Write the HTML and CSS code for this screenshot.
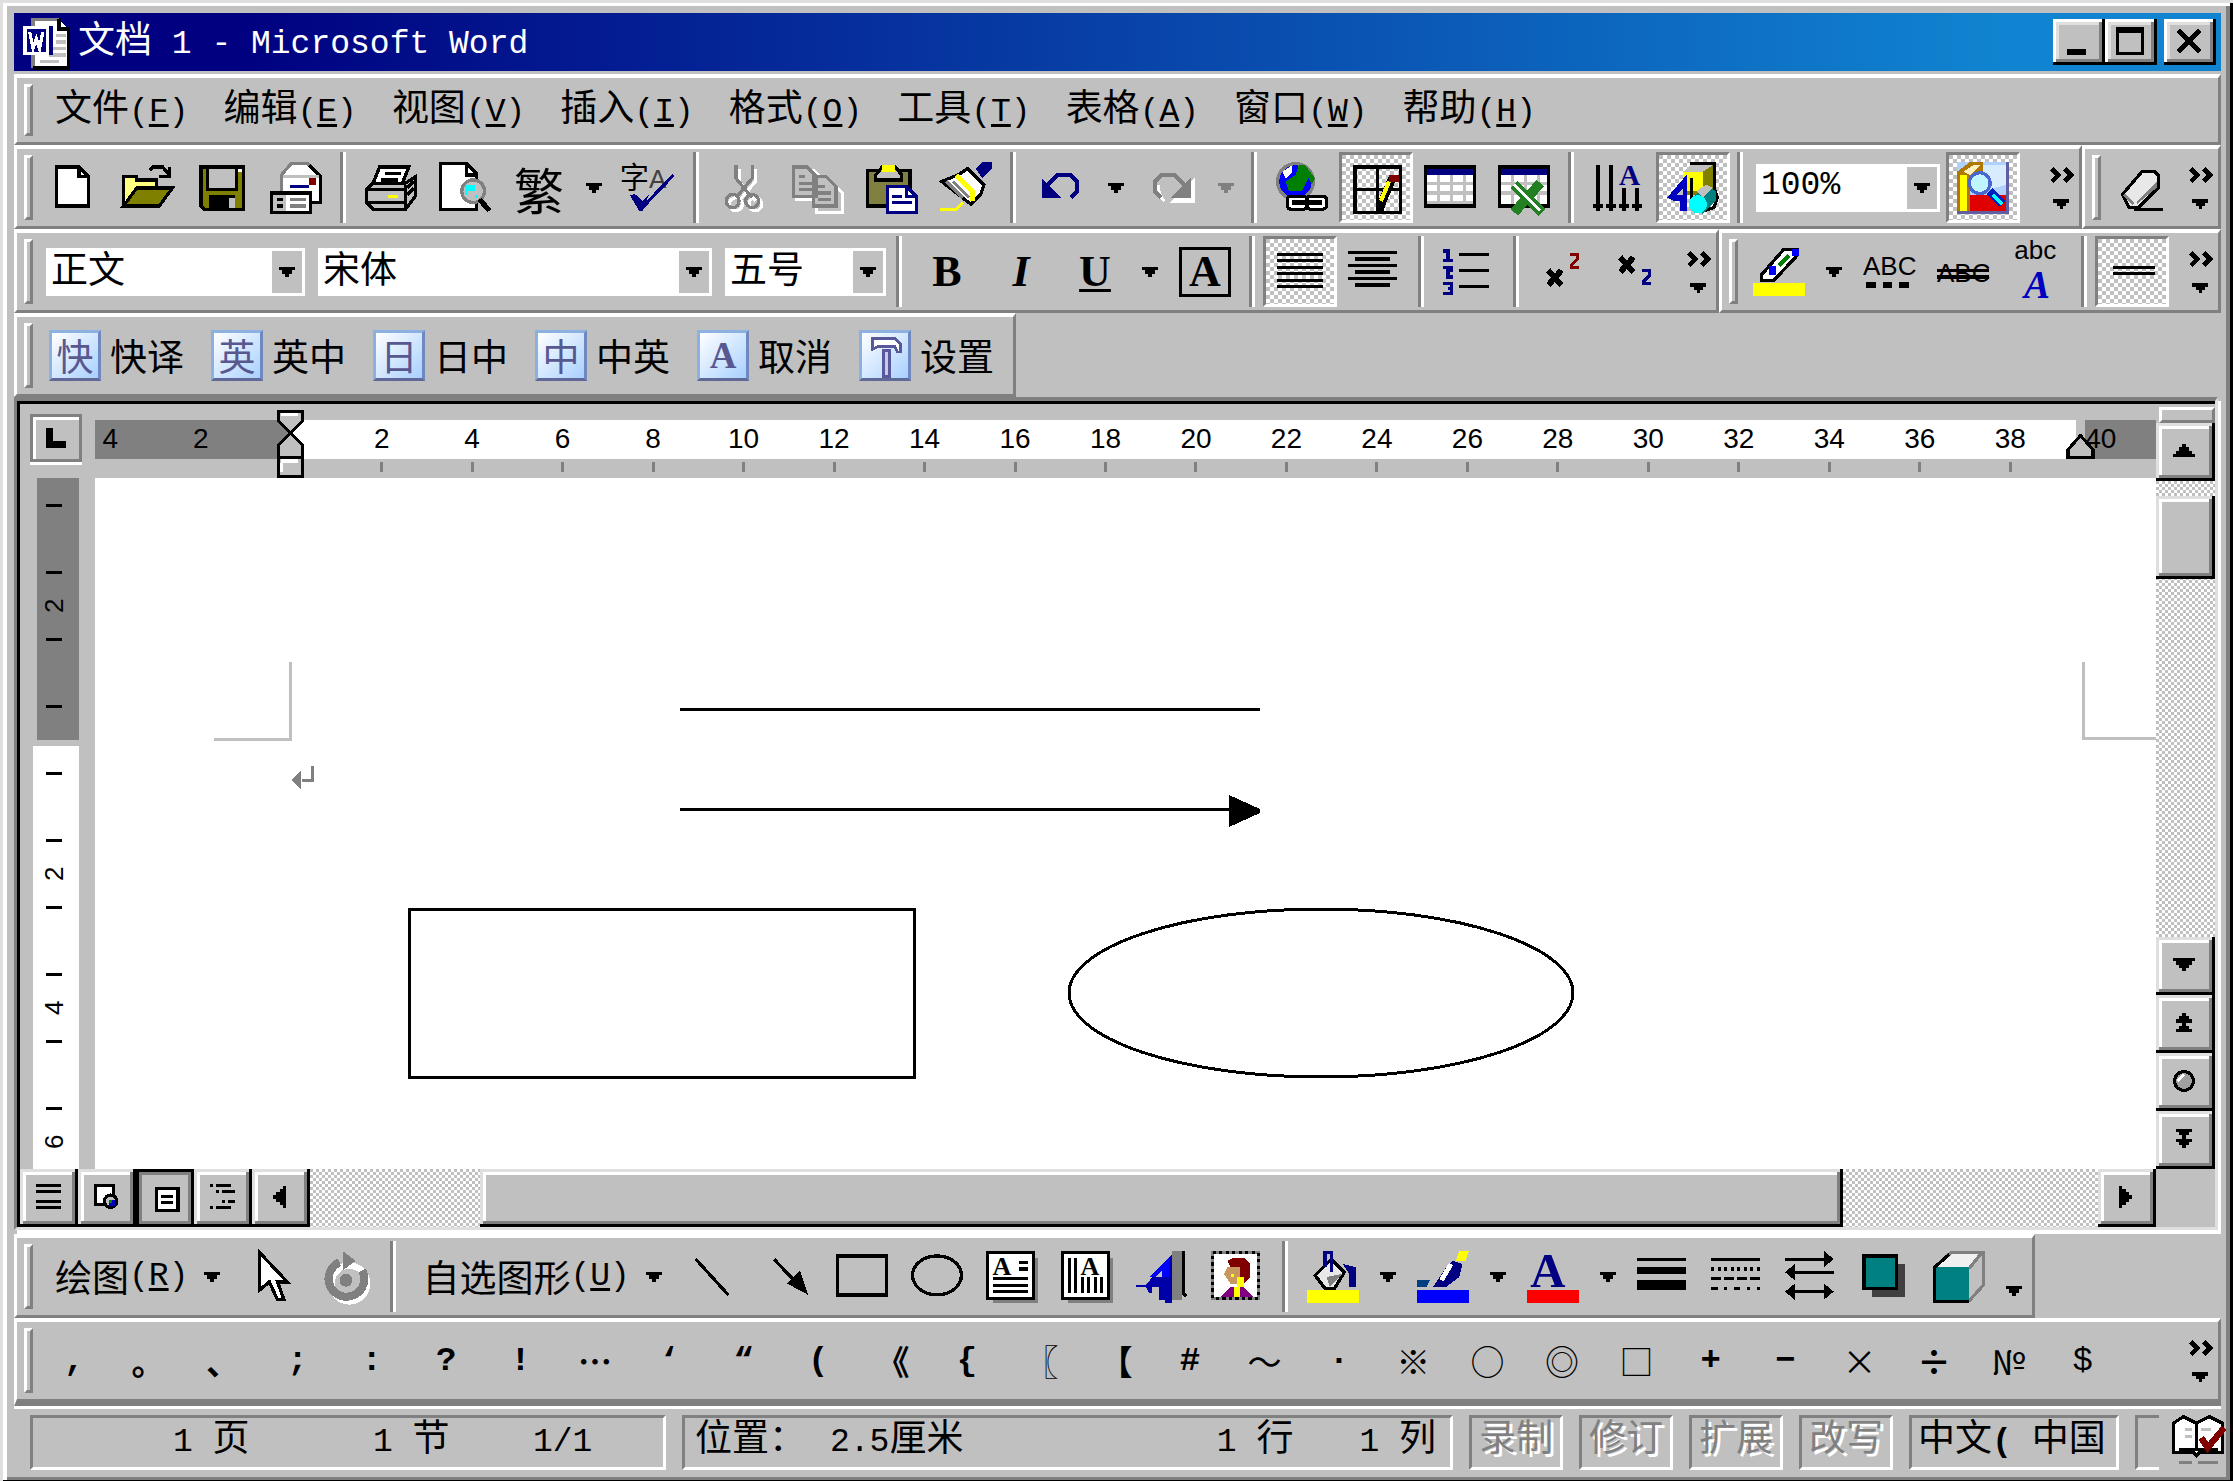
FILE: index.html
```html
<!DOCTYPE html>
<html lang="zh-CN">
<head>
  <meta charset="UTF-8">
  <title>文档 1 - Microsoft Word</title>
  <link rel="stylesheet" href="styles.css">
</head>
<body>

<svg class="defs" aria-hidden="true">
  <symbol id="caret" viewBox="0 0 5 3"><path d="M0 0h5v1H4v1H3v1H2V2H1V1H0z" fill="currentColor"/></symbol>
  <symbol id="more" viewBox="0 0 8 13">
    <path d="M.5 .5l2 2-2 2M4.5 .5l2 2-2 2" fill="none" stroke="#000" stroke-width="1.4"/>
    <path d="M1 10h5v1H5v1H4v1H3v-1H2v-1H1z"/>
  </symbol>
</svg>

<!-- Title bar -->
<header class="title-bar">
  <svg class="icon" viewBox="0 0 16 16">
    <path d="M4 1h8l3 3v12H4z" fill="#fff"/><path d="M4 16V1h8" fill="none" stroke="#808080"/>
    <path d="M12 1v3h3v12H4" fill="none" stroke="#000"/><path d="M11 6h3M11 8h3M10 10h4M9 12h5M6 14h6" stroke="#c0c0c0"/>
    <path d="M0 3h10v9H0z" fill="#000080"/><path d="M1 3.5h8M1 11.5h8M1.5 4v7M8.5 4v7" stroke="#fff"/>
    <path d="M3 5l1 5 1-3 1 3 1-5" fill="none" stroke="#fff"/>
  </svg>
  <h1>文档<span class="en"> 1 - Microsoft Word</span></h1>
  <div class="window-buttons">
    <button class="win-btn" aria-label="最小化"><svg viewBox="0 0 9 9"><path d="M1 7h6v2H1z"/></svg></button>
    <button class="win-btn" aria-label="最大化"><svg viewBox="0 0 9 9"><path d="M0 0h9v9H0zM1 2v6h7V2z" fill-rule="evenodd"/></svg></button>
    <button class="win-btn close" aria-label="关闭"><svg viewBox="0 0 9 9"><path d="M1 1l7 7M8 1L1 8" stroke="#000" stroke-width="1.8"/></svg></button>
  </div>
</header>

<!-- Menu -->
<nav class="bar menu-bar">
  <span class="grip"></span>
  <button>文件<span class="en">(<u>F</u>)</span></button>
  <button>编辑<span class="en">(<u>E</u>)</span></button>
  <button>视图<span class="en">(<u>V</u>)</span></button>
  <button>插入<span class="en">(<u>I</u>)</span></button>
  <button>格式<span class="en">(<u>O</u>)</span></button>
  <button>工具<span class="en">(<u>T</u>)</span></button>
  <button>表格<span class="en">(<u>A</u>)</span></button>
  <button>窗口<span class="en">(<u>W</u>)</span></button>
  <button>帮助<span class="en">(<u>H</u>)</span></button>
</nav>

<!-- Standard toolbar -->
<div class="bar-row">
  <div class="bar grow">
    <span class="grip"></span>
    <button class="tool" aria-label="新建"><svg class="icon" viewBox="0 0 16 16"><path d="M2.5 1.5h7l3 3v9h-10z" fill="#fff" stroke="#000"/><path d="M9.5 2v2.5H12" fill="none" stroke="#000"/></svg></button>
    <button class="tool" aria-label="打开"><svg class="icon" viewBox="0 0 16 16"><path d="M.5 13.5v-9h4v1h6v2.5" fill="#ffff80" stroke="#000"/><path d="M.5 13.5l4-5.5h11l-4 5.5z" fill="#808000" stroke="#000"/><path d="M8.5 2.5l1-1h3l2 2.5M11.5 4.5h3v-3" fill="none" stroke="#000"/></svg></button>
    <button class="tool" aria-label="保存"><svg class="icon" viewBox="0 0 16 16"><path d="M1.5 1.5h13v13h-12l-1-1z" fill="#808000" stroke="#000"/><path d="M4 2h8v6H4z" fill="#c0c0c0"/><path d="M3.5 2v6.5h9V2" fill="none" stroke="#000"/><path d="M4 10h8v5H4z"/><path d="M10 11h2v3h-2z" fill="#c0c0c0"/><path d="M13 2h1v1h-1z" fill="#fff"/></svg></button>
    <button class="tool" aria-label="电子邮件"><svg class="icon" viewBox="0 0 16 16"><path d="M3.5 10V4l3-3.5h5l4 4v8H12" fill="#fff" stroke="#808080"/><path d="M12 1l3.5 3.5v8H13" fill="none" stroke="#000"/><path d="M4 4.5h11" stroke="#c0c0c0"/><path d="M12 5h2v2h-2z" fill="#800000"/><path d="M6 7.5h6" stroke="#000080"/><path d="M.5 9.5h12v6H.5z" fill="#fff" stroke="#000"/><path d="M1 10h4v5H1z" fill="#c0c0c0"/><path d="M2 11.5h2M2 13.5h2" stroke="#000"/><path d="M6 11.5h5M6 13.5h5" stroke="#808080"/></svg></button>
    <span class="sep"></span>
    <button class="tool" aria-label="打印"><svg class="icon" viewBox="0 0 16 16"><path d="M2.5 6.5l2-5h9l-2 5" fill="#fff" stroke="#000"/><path d="M6 3.5h5M5 5.5h5" stroke="#000"/><path d="M.5 8.5l2-2h10l3-2v6l-3 4h-10l-2-2z" fill="#c0c0c0" stroke="#000"/><path d="M1 8.5h11M1 12.5h12M12.5 7v7M13 8l2-2M13 10l2-2" stroke="#000"/><path d="M7 10h3v1H7z" fill="#ff0"/></svg></button>
    <button class="tool" aria-label="打印预览"><svg class="icon" viewBox="0 0 16 16"><path d="M.5 .5h8l3 3v11H.5z" fill="#fff" stroke="#000"/><path d="M8.5 1v3H11" fill="none" stroke="#000"/><circle cx="10.5" cy="9" r="3.5" fill="#c0c0c0" stroke="#808080"/><path d="M8 7h3v2H9v1H8zM11 10h1v1h-1z" fill="#0ff"/><path d="M12.5 11.5l3 3.5" stroke="#000" stroke-width="1.6"/></svg></button>
    <button class="tool big-glyph" aria-label="简繁转换">繁</button>
    <button class="arrow" aria-label="更多转换"><svg class="caret"><use href="#caret"/></svg></button>
    <button class="tool" aria-label="拼写"><svg class="icon" viewBox="0 0 16 16"><text x="-1" y="8" font-size="9" class="cjk">字</text><text x="8" y="8" font-size="8" class="lat" fill="#404040">A</text><path d="M3 10l3 4L15.5 4" fill="none" stroke="#000080"/><path d="M2 10h2l2 2 2-2-2 5H5z" fill="#000080"/></svg></button>
    <span class="sep"></span>
    <button class="tool" aria-label="剪切" disabled><svg class="icon" viewBox="0 0 16 16"><g fill="none" stroke="#fff"><path d="M6.5 2v4l5 6M11.5 2v4l-5 6"/><circle cx="5.5" cy="13" r="2"/><circle cx="11.5" cy="13" r="2"/></g><g fill="none" stroke="#808080"><path d="M5.5 1v4l5 6M10.5 1v4l-5 6"/><circle cx="4.5" cy="12" r="2"/><circle cx="10.5" cy="12" r="2"/></g></svg></button>
    <button class="tool" aria-label="复制" disabled><svg class="icon" viewBox="0 0 16 16"><g fill="#c0c0c0" stroke="#fff"><path d="M1.5 2.5h5l3 3v6h-8zM7.5 5.5h4l4 4v6h-8z"/></g><g fill="#c0c0c0" stroke="#808080"><path d="M.5 1.5h4l3 3v6h-7zM6.5 4.5h4l3 3v6h-7z"/><path d="M2 4.5h2M2 6.5h4M2 8.5h4M8 7.5h2M8 9.5h4M8 11.5h4"/></g></svg></button>
    <button class="tool" aria-label="粘贴"><svg class="icon" viewBox="0 0 16 16"><path d="M.5 2.5h13v11H.5z" fill="#808040" stroke="#000"/><path d="M3 5.5V4l2-2.5h4L11 4v1.5z" fill="#c0c0c0" stroke="#000"/><path d="M5 1h4v2H5z" fill="#ff0"/><path d="M6.5 7.5h6l3 3v5h-9z" fill="#fff" stroke="#000080"/><path d="M8 10.5h3M8 12.5h6M12.5 8v2.5H15" fill="none" stroke="#000080"/></svg></button>
    <button class="tool" aria-label="格式刷"><svg class="icon" viewBox="0 0 16 16"><path d="M.5 6l5-2 3-2 5 5-1 3-3 3z" fill="#fff" stroke="#000"/><path d="M5 4l5 5v3" fill="none" stroke="#ff0" stroke-width="1.6"/><path d="M2 6l5 5M4 6l5 5" stroke="#808080"/><path d="M11 2l2 3 3-3V0h-3z" fill="#000080"/><path d="M0 14.5h5l2-2" fill="none" stroke="#ff0"/></svg></button>
    <span class="sep"></span>
    <button class="tool" aria-label="撤消"><svg class="icon" viewBox="0 0 16 16"><path d="M3 8l4-4h4l2 2v3l-2 2" fill="none" stroke="#000080" stroke-width="1.2"/><path d="M2 5v6h6z" fill="#000080"/></svg></button>
    <button class="arrow" aria-label="撤消列表"><svg class="caret"><use href="#caret"/></svg></button>
    <button class="tool" aria-label="恢复" disabled><svg class="icon" viewBox="0 0 16 16"><path d="M15 6v6H9zM4 7v3l2 2" fill="#fff" stroke="#fff"/><path d="M13 8L9 4H5L3 6v3l2 2" fill="none" stroke="#808080" stroke-width="1.2"/><path d="M14 5v6H8z" fill="#808080"/></svg></button>
    <button class="arrow" aria-label="恢复列表" disabled><svg class="caret"><use href="#caret"/></svg></button>
    <span class="sep"></span>
    <button class="tool" aria-label="超级链接"><svg class="icon" viewBox="0 0 16 16"><circle cx="6" cy="6" r="5.5" fill="#00f" stroke="#808080"/><path d="M7 1h2l3 4-1 2-1-2-2 4H4L3 6l3-2z" fill="#008000"/><path d="M2 3l3-2v2L3 5z" fill="#fff"/><rect x="3.5" y="10.5" width="6" height="4" rx="1" fill="#fff" stroke="#000"/><rect x="9.5" y="10.5" width="6" height="4" rx="1" fill="#fff" stroke="#000"/><path d="M5 12.5h9" stroke="#000" stroke-width="1.6"/></svg></button>
    <button class="tool pressed" aria-label="表格和边框"><svg class="icon" viewBox="0 0 16 16"><path d="M1.5 1.5h14v14h-14zM8.5 2v13M2 8.5h13" fill="none" stroke="#000"/><path d="M13 5l-3 7-1 3" fill="none" stroke="#000" stroke-width="2.5"/><path d="M12 6l-2.5 6" stroke="#ff0" stroke-width="1.3"/><path d="M12 4h3v2h-3z" fill="#800000"/></svg></button>
    <button class="tool" aria-label="插入表格"><svg class="icon" viewBox="0 0 16 16"><path d="M.5 1.5h15v12H.5z" fill="#fff" stroke="#000"/><path d="M1 2h14v2H1z" fill="#000080"/><path d="M4.5 4v9M8.5 4v9M12.5 4v9M1 6.5h14M1 9.5h14M1 12.5h14" stroke="#c0c0c0"/></svg></button>
    <button class="tool" aria-label="插入 Excel 工作表"><svg class="icon" viewBox="0 0 16 16"><path d="M.5 1.5h15v12H.5z" fill="#fff" stroke="#000"/><path d="M1 2h14v2H1z" fill="#000080"/><path d="M4.5 4v9M8.5 4v9M12.5 4v9M1 6.5h14M1 9.5h14" stroke="#c0c0c0"/><path d="M5 7l8.5 8.5M13 6.5L5 15.5" stroke="#228022" stroke-width="3"/><path d="M5 7l8 8" stroke="#fff"/></svg></button>
    <span class="sep"></span>
    <button class="tool" aria-label="更改文字方向"><svg class="icon" viewBox="0 0 16 16"><path d="M1.5 1v14M5.5 1v14M9.5 8v7M13.5 8v7M0 13.5h3M4 13.5h3M8 13.5h3M12 13.5h3" stroke="#000"/><text x="8" y="7" font-size="9" class="serif" fill="#000080">A</text></svg></button>
    <button class="tool pressed" aria-label="绘图"><svg class="icon" viewBox="0 0 16 16"><path d="M5 3l2-2h8v6l-2 3H5z" fill="#808000"/><path d="M5 3h6v6H5z" fill="#ff0"/><path d="M5 3l2-2h7l-3 2z" fill="#c0c0c0"/><path d="M14.5 1v7l1 3-1 3-3 1M7 .5h8" fill="none" stroke="#000"/><path d="M0 11l6-7v11H4v-3H2z" fill="#0000c0"/><path d="M3 10l2-2v2z" fill="#c0c0c0"/><path d="M7.5 5v9" stroke="#000"/><path d="M8 11l4-4 3 2v3l-4 4z" fill="#008080"/><path d="M9 9l3-2 2 1-3 3z" fill="#c0c0c0"/><circle cx="9.5" cy="13" r="2.8" fill="#0ff"/></svg></button>
    <span class="sep"></span>
    <div class="combo zoom"><select class="en" aria-label="显示比例"><option>100%</option></select><span class="drop"><svg class="caret"><use href="#caret"/></svg></span></div>
    <button class="tool pressed" aria-label="查词"><svg class="icon" viewBox="0 0 16 16"><path d="M0 0h16v16H0z" fill="#b0d0ff"/><path d="M15.5 0v15.5H0" fill="none" stroke="#6060a0"/><path d="M8 1h7v6l-7 2z" fill="#d8ecff"/><path d="M0 3l4-3h4v3L4 5v10H0z" fill="#b07800"/><path d="M1 4h2v11H1z" fill="#ff0"/><path d="M2 3l3-2h2L4 4z" fill="#fff0c0"/><path d="M4 10h11v5H4z" fill="#e00000"/><path d="M10 9l4 4" stroke="#0020c0" stroke-width="2.6"/><path d="M11 10l3 3" stroke="#0ff"/><circle cx="7" cy="6.5" r="3.2" fill="#c0f4ff" stroke="#4868d0"/></svg></button>
    <button class="more" aria-label="其他按钮"><svg><use href="#more"/></svg></button>
  </div>
  <div class="bar">
    <span class="grip"></span>
    <button class="tool narrow" aria-label="橡皮擦"><svg class="icon" viewBox="0 0 16 16"><path d="M3.5 10l6-7h4l1 1v4l-6 6h-3z" fill="#e8e8e8" stroke="#000"/><path d="M8 13l6-5V6l-6 6z" fill="#808080"/><path d="M4 10l3 3" stroke="#808080"/><path d="M7 14.5h9" stroke="#000"/></svg></button>
    <button class="more" aria-label="其他按钮"><svg><use href="#more"/></svg></button>
  </div>
</div>

<!-- Formatting toolbar -->
<div class="bar-row">
  <div class="bar grow">
    <span class="grip"></span>
    <div class="combo style"><select aria-label="样式"><option>正文</option></select><span class="drop"><svg class="caret"><use href="#caret"/></svg></span></div>
    <div class="combo font"><select aria-label="字体"><option>宋体</option></select><span class="drop"><svg class="caret"><use href="#caret"/></svg></span></div>
    <div class="combo size"><select aria-label="字号"><option>五号</option></select><span class="drop"><svg class="caret"><use href="#caret"/></svg></span></div>
    <span class="sep wide"></span>
    <button class="tool letter"><b>B</b></button>
    <button class="tool letter"><i>I</i></button>
    <button class="tool letter"><u>U</u></button>
    <button class="arrow" aria-label="下划线样式"><svg class="caret"><use href="#caret"/></svg></button>
    <button class="tool letter"><span class="boxed">A</span></button>
    <span class="sep"></span>
    <button class="tool pressed" aria-label="两端对齐"><svg class="icon" viewBox="0 0 16 16"><path d="M1 2.5h14M1 4.5h14M1 6.5h14M1 8.5h14M1 10.5h14M1 12.5h14" stroke="#000"/></svg></button>
    <button class="tool" aria-label="居中"><svg class="icon" viewBox="0 0 16 16"><path d="M0 2h15M2 4h11M0 6h15M2 8h11M0 10h15M2 12h11" stroke="#000"/></svg></button>
    <span class="sep"></span>
    <button class="tool" aria-label="编号"><svg class="icon" viewBox="0 0 16 16"><path d="M5 2.5h9M5 7.5h9M5 12.5h9" stroke="#000"/><path d="M0 1.5h1.5V4M0 4.5h3M0 6.5h2.5v1h-1v2H3M0 11.5h2.5v1.5h-1M2.5 13v1.5H0" fill="none" stroke="#000080"/></svg></button>
    <span class="sep"></span>
    <button class="tool script" aria-label="上标"><svg class="icon" viewBox="0 0 16 16"><path d="M3.5 7.5l4 4.5M7.5 7.5l-4 4.5" stroke="#000" stroke-width="1.8"/><path d="M10 2.5h2.5v1.5l-2 2v.5H13" fill="none" stroke="#800000"/></svg></button>
    <button class="tool script" aria-label="下标"><svg class="icon" viewBox="0 0 16 16"><path d="M3.500 3.5l4 4.5M7.5 3.5l-4 4.5" stroke="#000" stroke-width="1.8"/><path d="M10 7.5h2.5v1.5l-2 2v.5H13" fill="none" stroke="#000080"/></svg></button>
    <button class="more tight" aria-label="其他按钮"><svg><use href="#more"/></svg></button>
  </div>
  <div class="bar">
    <span class="grip"></span>
    <button class="tool" aria-label="突出显示"><svg class="icon" viewBox="0 0 16 16"><path d="M0 11.5h16v4H0z" fill="#ff0"/><path d="M2.5 10.5V9l7-8h4v2l-7 7.5z" fill="#fff" stroke="#000"/><path d="M12 1h2v2h-2zM5 6h2v3H5z" fill="#00f"/><path d="M8 6l3-3" stroke="#008000" stroke-width="1.5"/></svg></button>
    <button class="arrow" aria-label="突出显示颜色"><svg class="caret"><use href="#caret"/></svg></button>
    <button class="tool" aria-label="着重号"><svg class="icon" viewBox="0 0 16 16"><text x="0" y="9" font-size="8" class="lat">ABC</text><path d="M1 11h3v2H1zM6 11h3v2H6zM11 11h3v2h-3z"/></svg></button>
    <button class="tool" aria-label="双删除线"><svg class="icon" viewBox="0 0 16 16"><text x="0" y="11" font-size="8" class="lat">ABC</text><path d="M0 7.5h16M0 9.5h16" stroke="#000"/></svg></button>
    <button class="tool" aria-label="更改大小写"><svg class="icon" viewBox="0 0 16 16"><text x="1" y="4" font-size="8" class="lat">abc</text><text x="4" y="16" font-size="12" class="serif-i" fill="#0000c0">A</text></svg></button>
    <span class="sep"></span>
    <button class="tool pressed" aria-label="线型"><svg class="icon" viewBox="0 0 16 16"><path d="M2 6.5h13M2 8.5h13" stroke="#000"/></svg></button>
    <button class="more" aria-label="其他按钮"><svg><use href="#more"/></svg></button>
  </div>
</div>

<!-- Translation toolbar -->
<div class="bar-row">
  <div class="bar translate">
    <span class="grip"></span>
    <button class="trans"><span class="tile">快</span>快译</button>
    <button class="trans"><span class="tile">英</span>英中</button>
    <button class="trans"><span class="tile">日</span>日中</button>
    <button class="trans"><span class="tile">中</span>中英</button>
    <button class="trans"><span class="tile serif">A</span>取消</button>
    <button class="trans"><span class="tile"><svg class="hammer" viewBox="0 0 16 16"><path d="M7.5 6h2v9.5h-2z" fill="#c8c8e8" stroke="#58589a"/><path d="M3.5 1.5v4l2-1h6l1 2h1v-3l-2-2z" fill="#fff" stroke="#58589a"/></svg></span>设置</button>
  </div>
</div>

<!-- Document window -->
<main class="doc-frame">
  <div class="corner"><button class="tab-stop" aria-label="制表符"><svg viewBox="0 0 6 6"><path d="M0 0h2v4h4v2H0z"/></svg></button></div>
  <div class="ruler">
    <div class="ruler-numbers">
      <span>4</span><span>2</span><span></span>
      <span class="t">2</span><span class="t">4</span><span class="t">6</span><span class="t">8</span><span class="t">10</span>
      <span class="t">12</span><span class="t">14</span><span class="t">16</span><span class="t">18</span><span class="t">20</span>
      <span class="t">22</span><span class="t">24</span><span class="t">26</span><span class="t">28</span><span class="t">30</span>
      <span class="t">32</span><span class="t">34</span><span class="t">36</span><span class="t">38</span><span>40</span>
    </div>
    <svg class="indent-left" viewBox="0 0 9 22"><path d="M.5 .5h8v3l-4 4 4 4v10h-8v-10l4-4-4-4z" fill="#c0c0c0" stroke="#000"/><path d="M0 15.5h9" stroke="#000"/><path d="M1.5 17v3M1.5 16.5H7M1.5 1.5H7" stroke="#fff"/></svg>
    <svg class="indent-right" viewBox="0 0 9 8"><path d="M.5 7.5V5l4-4.5 4 4.5v2.5z" fill="#c0c0c0" stroke="#000"/></svg>
  </div>
  <div class="v-ruler">
    <div class="v-margin"><span></span><span>2</span><span></span><span></span></div>
    <div class="v-page"><span></span><span>2</span><span></span><span>4</span><span></span><span>6</span></div>
  </div>
  <div class="page">
    <svg class="canvas">
      <path d="M195 184v77H119" fill="none" stroke="#c0c0c0" stroke-width="3"/>
      <path d="M217 288v14h-10" fill="none" stroke="#808080" stroke-width="3"/><path d="M197 302l9-10v20z" fill="#808080"/>
      <path d="M585 231h580M585 331h550" stroke="#000" stroke-width="3"/>
      <path d="M1134 317v32l31-14v-4z"/>
      <path d="M314 431h505v168H314z" fill="none" stroke="#000" stroke-width="3"/>
      <ellipse cx="1226" cy="515" rx="252" ry="84" fill="none" stroke="#000" stroke-width="3"/>
    </svg>
    <div class="crop-mark"></div>
  </div>
  <div class="v-scroll">
    <button class="split" aria-label="拆分"></button>
    <button class="raised" aria-label="向上滚动"><svg class="tri" viewBox="0 0 7 4"><path d="M3 0h1v1h1v1h1v1h1v1H0V3h1V2h1V1h1z"/></svg></button>
    <div class="v-track"><div class="raised v-thumb"></div></div>
    <button class="raised" aria-label="向下滚动"><svg class="tri" viewBox="0 0 7 4"><path d="M0 0h7v1H6v1H5v1H4v1H3V3H2V2H1V1H0z"/></svg></button>
    <button class="raised" aria-label="前一页"><svg class="dbl" viewBox="0 0 5 6"><path d="M2 0h1v1h1v1h1v1H3v1h1v1h1v1H0V5h1V4h1V3H0V2h1V1h1z"/></svg></button>
    <button class="raised" aria-label="选择浏览对象"><svg class="ball" viewBox="0 0 7 7"><circle cx="3.5" cy="3.5" r="3" fill="#a0a0a0" stroke="#000"/><path d="M1.5 3.5l2-2" stroke="#fff"/></svg></button>
    <button class="raised" aria-label="下一页"><svg class="dbl" viewBox="0 0 5 6"><path d="M0 0h5v1H4v1H3v1h2v1H4v1H3v1H2V5H1V4H0V3h2V2H1V1H0z"/></svg></button>
  </div>
  <div class="h-scroll">
    <button class="raised" aria-label="普通视图"><svg class="view" viewBox="0 0 8 8"><path d="M0 .5h8M0 2.5h8M0 5.5h8M0 7.5h8" stroke="#000"/></svg></button>
    <button class="raised" aria-label="Web 版式视图"><svg class="view" viewBox="0 0 8 8"><path d="M.5 .5h6v6h-6z" fill="#fff" stroke="#000"/><circle cx="5.5" cy="5.5" r="2" fill="#c0c0c0" stroke="#000"/><path d="M5 5h2v2H5z" fill="#0000c0"/><path d="M5 5h1v1H5z" fill="#008000"/></svg></button>
    <button class="raised down" aria-label="页面视图"><svg class="view" viewBox="0 0 8 8"><path d="M.5 .5h7v7h-7z" fill="#fff" stroke="#000"/><path d="M2 3h4M2 5h4" stroke="#000"/></svg></button>
    <button class="raised" aria-label="大纲视图"><svg class="view" viewBox="0 0 8 8"><path d="M0 .5h1M2 .5h5M2 2.5h1M4 2.5h4M4 5.5h1M6 5.5h2M0 7.5h1M2 7.5h5" stroke="#000"/></svg></button>
    <button class="raised" aria-label="向左滚动"><svg class="side" viewBox="0 0 4 7"><path d="M4 0v7H3V6H2V5H1V4H0V3h1V2h1V1h1V0z"/></svg></button>
    <div class="h-track"><div class="raised h-thumb"></div></div>
    <button class="raised" aria-label="向右滚动"><svg class="side" viewBox="0 0 4 7"><path d="M0 0v7h1V6h1V5h1V4h1V3H3V2H2V1H1V0z"/></svg></button>
    <div class="size-box"></div>
  </div>
</main>

<!-- Drawing toolbar -->
<div class="bar-row">
  <div class="bar drawing">
    <span class="grip"></span>
    <button class="text-tool">绘图<span class="en">(<u>R</u>)</span><svg class="caret"><use href="#caret"/></svg></button>
    <button class="tool" aria-label="选择对象"><svg class="icon" viewBox="0 0 16 16"><path d="M4.5 .5v11.5l3-2.5 2.5 5.5h2l-2-5.5h3z" fill="#fff" stroke="#000"/></svg></button>
    <button class="tool" aria-label="自由旋转" disabled><svg class="icon" viewBox="0 0 16 16"><circle cx="9" cy="10" r="5.5" fill="none" stroke="#fff" stroke-width="2"/><path d="M6 3.5A5.5 5.5 0 1 0 13 6" fill="none" stroke="#808080" stroke-width="2.5"/><path d="M7 0v6l4-3z" fill="#808080"/><circle cx="8" cy="9" r="2" fill="#808080"/></svg></button>
    <span class="sep"></span>
    <button class="text-tool">自选图形<span class="en">(<u>U</u>)</span><svg class="caret"><use href="#caret"/></svg></button>
    <button class="tool" aria-label="直线"><svg class="icon" viewBox="0 0 16 16"><path d="M3 2.5l10 11" stroke="#000"/></svg></button>
    <button class="tool" aria-label="箭头"><svg class="icon" viewBox="0 0 16 16"><path d="M4 2.5l8 8.5" stroke="#000"/><path d="M14.5 13.5L8 10l4-4z"/></svg></button>
    <button class="tool" aria-label="矩形"><svg class="icon" viewBox="0 0 16 16"><path d="M.5 1.5h15v12H.5z" fill="none" stroke="#000"/></svg></button>
    <button class="tool" aria-label="椭圆"><svg class="icon" viewBox="0 0 16 16"><ellipse cx="8" cy="7.5" rx="7.5" ry="6" fill="none" stroke="#000"/></svg></button>
    <button class="tool" aria-label="文本框"><svg class="icon" viewBox="0 0 16 16"><path d="M2 2h14v14H2z" fill="#808080"/><path d="M.5 .5h14v14H.5z" fill="#fff" stroke="#000"/><path d="M10 3.5h3M10 5.5h3M2 8.5h11M2 10.5h11M2 12.5h11" stroke="#000"/><text x="2" y="7.5" font-size="8" class="serif">A</text></svg></button>
    <button class="tool" aria-label="竖排文本框"><svg class="icon" viewBox="0 0 16 16"><path d="M2 2h14v14H2z" fill="#808080"/><path d="M.5 .5h14v14H.5z" fill="#fff" stroke="#000"/><path d="M2.5 2v11M4.5 2v11M6.5 8v5M8.5 8v5M10.5 8v5M12.5 8v5" stroke="#000"/><text x="6" y="7.5" font-size="8" class="serif">A</text></svg></button>
    <button class="tool" aria-label="插入艺术字"><svg class="icon" viewBox="0 0 16 16"><path d="M11 0h3v15h-3z" fill="#808080"/><path d="M14.5 0v13l1 1" fill="none" stroke="#000"/><path d="M0 10.5h3L11 1v15h-2v-1H7v-4H5v2H4l-1-2H0z" fill="#0000a8"/><path d="M4 8l6-6v6z" fill="#00f"/><path d="M6 8l2-2v2z" fill="#c0c0c0"/></svg></button>
    <button class="tool" aria-label="插入剪贴画"><svg class="icon" viewBox="0 0 16 16"><path d="M.5 .5h14v14H.5z" fill="#fff" stroke="#808080"/><path d="M.5 .5h14v14H.5z" fill="none" stroke="#000" stroke-dasharray="1 1"/><path d="M5 3l2-1h3l2 2v4l-2 2-4-5z" fill="#800000"/><path d="M5 5h4v5H6L4 7z" fill="#c89860"/><path d="M6 7h1v1H6zM8 8h2v3H8z" fill="#ff0"/><path d="M3 14l3-3h4l3 3z" fill="#800080"/><path d="M7 11h2v3H7z" fill="#ff0"/></svg></button>
    <span class="sep"></span>
    <button class="tool" aria-label="填充颜色"><svg class="icon" viewBox="0 0 16 16"><path d="M0 12h16v4H0z" fill="#ff0"/><path d="M2.5 7.5l5-5 4 4-3 5h-3z" fill="#e8e8e8" stroke="#000"/><path d="M6 8l5-1-4 4z" fill="#808080"/><path d="M5.5 5V.5h2v6" fill="none" stroke="#000080"/><path d="M11 4l4 1v6h-2V7z" fill="#000080"/></svg></button>
    <button class="arrow" aria-label="填充颜色列表"><svg class="caret"><use href="#caret"/></svg></button>
    <button class="tool" aria-label="线条颜色"><svg class="icon" viewBox="0 0 16 16"><path d="M0 12h16v4H0z" fill="#00f"/><path d="M13 0h3l-1 3h-3z" fill="#ff0"/><path d="M5 11l4-6 2-2 3 1-1 4-4 3z" fill="#000080"/><path d="M7.5 9l3-5" stroke="#fff" stroke-width="1.5"/><path d="M0 9h4l-1 2H0z" fill="#004080"/></svg></button>
    <button class="arrow" aria-label="线条颜色列表"><svg class="caret"><use href="#caret"/></svg></button>
    <button class="tool" aria-label="字体颜色"><svg class="icon" viewBox="0 0 16 16"><path d="M0 12h16v4H0z" fill="red"/><text x="1" y="11" font-size="15" class="serif" fill="#000080">A</text></svg></button>
    <button class="arrow" aria-label="字体颜色列表"><svg class="caret"><use href="#caret"/></svg></button>
    <button class="tool" aria-label="线型"><svg class="icon" viewBox="0 0 16 16"><path d="M0 2h15v1H0zM0 5h15v2H0zM0 9h15v3H0z"/></svg></button>
    <button class="tool" aria-label="虚线线型"><svg class="icon" viewBox="0 0 16 16"><path d="M0 2.5h15" stroke="#000"/><path d="M0 5.5h15" stroke="#000" stroke-dasharray="1 1"/><path d="M0 8.5h15" stroke="#000" stroke-dasharray="3 1"/><path d="M0 11.5h15" stroke="#000" stroke-dasharray="2 2 1 2"/></svg></button>
    <button class="tool" aria-label="箭头样式"><svg class="icon" viewBox="0 0 16 16"><path d="M0 2.5h14M1 6.5h14M1 12.5h13" stroke="#000"/><path d="M12 0l3 2.5L12 5zM3 4L0 6.5 3 9zM3 10l-3 2.5L3 15zM12 10l3 2.5-3 2.5z"/></svg></button>
    <button class="tool" aria-label="阴影"><svg class="icon" viewBox="0 0 16 16"><path d="M4 4h10v10H4z" fill="#404040"/><path d="M1.5 1.5h10v10h-10z" fill="#008080" stroke="#000"/></svg></button>
    <button class="tool" aria-label="三维效果"><svg class="icon" viewBox="0 0 16 16"><path d="M.5 5l5-4.5h10v10l-4.5 5" fill="#c0c0c0" stroke="#808080"/><path d="M1 5l5-4h9l-4 4z" fill="#f0f0f0"/><path d="M11 5.5l4-5" stroke="#808080"/><path d="M.5 5h10.5v10.5H.5z" fill="#008080"/><path d="M5 1L.5 5v10.5H11" fill="none" stroke="#000"/></svg></button>
    <button class="arrow low" aria-label="其他按钮"><svg class="caret"><use href="#caret"/></svg></button>
  </div>
</div>

<!-- Symbol toolbar -->
<div class="bar symbols">
  <span class="grip"></span>
  <button>,</button><button class="cjk">。</button><button class="cjk">、</button><button>;</button><button>:</button><button>?</button><button>!</button>
  <button class="cjk">…</button><button>‘</button><button>“</button><button>(</button><button class="cjk">《</button><button>{</button><button class="cjk">〖</button>
  <button class="cjk">【</button><button>#</button><button class="cjk light">～</button><button>·</button><button class="cjk">※</button><button class="cjk light">○</button><button class="cjk light">◎</button>
  <button class="cjk light">□</button><button>+</button><button>−</button><button class="cjk light">×</button><button class="cjk">÷</button><button class="cjk light">№</button><button class="light">$</button>
  <button class="more" aria-label="其他按钮"><svg><use href="#more"/></svg></button>
</div>

<!-- Status bar -->
<footer class="status">
  <div class="panel page-info"><span><span class="en">1 </span>页</span><span><span class="en">1 </span>节</span><span class="en">1/1</span></div>
  <div class="panel position"><span>位置：</span><span><span class="en">2.5</span>厘米</span><span class="line-no"><span class="en">1 </span>行</span><span><span class="en">1 </span>列</span></div>
  <div class="panel mode">录制</div>
  <div class="panel mode">修订</div>
  <div class="panel mode">扩展</div>
  <div class="panel mode">改写</div>
  <div class="panel language">中文<b class="en">(</b><span>中国</span></div>
  <div class="panel spell"></div>
  <svg class="icon book" viewBox="0 0 16 16"><path d="M.5 2.5l3-2 4 2 4-2 4 2v9h-7l-1 1-1-1h-6z" fill="#fff" stroke="#000"/><path d="M7.5 2v9M2 10.5h12" stroke="#000"/><path d="M4 4.5h2M4 6.5h2M9 4.5h3" stroke="#c0c0c0"/><path d="M9 7l2 3 5-6" fill="none" stroke="#800000" stroke-width="2"/><path d="M2 14.5h4M8 14.5h6" stroke="#808080"/></svg>
</footer>

</body>
</html>
```
FILE: styles.css
```css
* {
  box-sizing: border-box;
}

body {
  margin: 0;
  height: 100vh;
  padding: 13px 12px 11px 14px;
  display: flex;
  flex-direction: column;
  overflow: hidden;
  background: #c0c0c0;
  box-shadow: inset 3px 3px #dfdfdf, inset -3px -1px #000, inset 7px 6px #fff, inset -7px -4px #808080;
  font-family: "Noto Sans CJK SC", sans-serif;
  font-size: 37px;
  line-height: 1;
  color: #000;
}

button {
  margin: 0;
  padding: 0;
  border: none;
  background: none;
  font: inherit;
  color: inherit;
}

svg {
  display: block;
  shape-rendering: crispEdges;
}

.defs {
  position: absolute;
  width: 0;
  height: 0;
}

.icon {
  width: 52px;
  height: 52px;
  overflow: visible;
}

.en {
  font-family: "Liberation Mono", monospace;
  font-size: 33px;
  white-space: pre;
}

.lat {
  font-family: "Liberation Sans", sans-serif;
}

.serif {
  font-family: "Liberation Serif", serif;
  font-weight: bold;
}

.serif-i {
  font-family: "Liberation Serif", serif;
  font-weight: bold;
  font-style: italic;
}

.cjk {
  font-family: "Noto Sans CJK SC", sans-serif;
}

/* title bar */
.title-bar {
  display: flex;
  align-items: center;
  height: 58px;
  margin-bottom: 3px;
  padding: 0 5px 0 6px;
  background: linear-gradient(to right, #000080 10%, #1084d0 90%);
  color: #fff;
}

.title-bar h1 {
  margin: 0 0 0 6px;
  padding-bottom: 4px;
  font-size: 37px;
  font-weight: normal;
}

.window-buttons {
  display: flex;
  margin-left: auto;
}

.win-btn {
  display: flex;
  align-items: center;
  justify-content: center;
  width: 52px;
  height: 46px;
  padding: 0 3px 3px 0;
  background: #c0c0c0;
  box-shadow: inset -3px -3px #000, inset 3px 3px #fff, inset -6px -6px #808080, inset 6px 6px #dfdfdf;
}

.win-btn svg {
  width: 28px;
  height: 28px;
}

.win-btn.close {
  margin-left: 7px;
}

/* toolbars */
.bar-row {
  display: flex;
}

.bar {
  display: flex;
  align-items: center;
  height: 84px;
  border: solid;
  border-width: 4px 3px 3px;
  border-color: #fff #808080 #808080 #fff;
}

.grow {
  flex: 1;
}

.grip {
  align-self: stretch;
  flex: none;
  width: 9px;
  margin: 6px 4px 6px 7px;
  border: 3px solid;
  border-color: #fff #808080 #808080 #fff;
}

.menu-bar {
  height: 71px;
}

.menu-bar button {
  padding: 0 17px 4px 18px;
}

u {
  text-decoration-thickness: 3px;
  text-underline-offset: 3px;
}

.tool {
  display: flex;
  align-items: center;
  justify-content: center;
  width: 74px;
  height: 71px;
  flex: none;
}

.narrow {
  width: 64px;
}

.script {
  width: 72px;
}

.pressed {
  border: 3px solid;
  border-color: #808080 #fff #fff #808080;
  background: repeating-conic-gradient(#fff 0 25%, #c0c0c0 0 50%) 0 0 / 8px 8px;
}

.big-glyph {
  font-size: 50px;
}

.arrow {
  display: flex;
  align-items: center;
  justify-content: center;
  width: 36px;
  height: 71px;
}

.arrow:disabled {
  color: #808080;
}

.arrow.low {
  align-items: flex-end;
  padding-bottom: 16px;
}

.caret {
  width: 16px;
  height: 10px;
}

.sep {
  flex: none;
  width: 6px;
  height: 71px;
  margin: 0 8px 0 7px;
  border-left: 3px solid #808080;
  border-right: 3px solid #fff;
}

.more {
  flex: none;
  width: 49px;
  height: 71px;
  padding-right: 3px;
  margin-left: auto;
}

.more.tight {
  width: 42px;
}

.more svg {
  width: 26px;
  height: 42px;
  margin-left: auto;
}

.combo {
  display: flex;
  flex: none;
  height: 48px;
  padding: 3px;
  background: #fff;
}

/* taller than the box so that the full line of Chinese text fits */
.combo select {
  flex: 1;
  height: 56px;
  margin-top: -12px;
  padding: 0 0 0 2px;
  border: none;
  appearance: none;
  background: none;
  color: #000;
  font-family: "Noto Sans CJK SC", sans-serif;
  font-size: 37px;
}

.combo select.en {
  height: 34px;
  margin-top: 0;
  font-family: "Liberation Mono", monospace;
  font-size: 33px;
}

.drop {
  display: flex;
  align-items: center;
  justify-content: center;
  width: 30px;
  background: #c0c0c0;
}

.zoom {
  width: 184px;
  margin: 0 6px 0 5px;
}

.style {
  width: 259px;
  margin-left: 9px;
}

.font {
  width: 394px;
  margin: 0 13px;
}

.size {
  width: 161px;
}

.sep.wide {
  margin-left: 10px;
}

.letter {
  font-family: "Liberation Serif", serif;
  font-weight: bold;
  font-size: 44px;
}

.boxed {
  width: 52px;
  height: 50px;
  border: 3px solid #000;
  line-height: 44px;
}

.translate {
  padding-right: 4px;
}

.trans {
  display: flex;
  align-items: center;
  gap: 9px;
  padding: 0 15px 0 12px;
}

.tile {
  display: flex;
  align-items: center;
  justify-content: center;
  width: 52px;
  height: 51px;
  border: 3px solid;
  border-color: #8cb0e0 #7088c0 #606898 #8cb0e0;
  background: linear-gradient(135deg, #fff, #a8d0ff);
  color: #585890;
}

.hammer {
  width: 44px;
  height: 44px;
}

/* document window */
.doc-frame {
  flex: 1;
  min-height: 0;
  display: grid;
  grid-template: 74px 1fr 58px / 75px 1fr 59px;
  border: 3px solid;
  border-color: #808080 #dfdfdf #dfdfdf #808080;
  border-top-width: 4px;
  box-shadow: inset 3px 3px #000, 3px 4px #fff;
  padding: 3px 0 0 3px;
  margin: 0 3px 4px 0;
}

.corner {
  padding: 10px 0 0 10px;
}

.tab-stop {
  display: flex;
  align-items: center;
  justify-content: center;
  width: 52px;
  height: 48px;
  border: 3px solid #808080;
  box-shadow: inset 3px 3px #fff, 0 3px #fff;
}

.tab-stop svg {
  width: 20px;
  height: 20px;
}

.ruler {
  position: relative;
  margin: 16px 0 19px;
  background: linear-gradient(to right, #808080 195px, #fff 195px, #fff calc(100% - 80px), #c0c0c0 calc(100% - 80px), #c0c0c0 calc(100% - 71px), #808080 calc(100% - 71px));
}

.ruler-numbers {
  display: grid;
  grid-template-columns: repeat(23, 1fr);
  margin: 0 10px 0 -30px;
  font-family: "Liberation Sans", sans-serif;
  font-size: 28px;
  line-height: 37px;
  text-align: center;
}

.ruler-numbers .t::after {
  content: "";
  display: block;
  width: 3px;
  height: 10px;
  margin: 5px auto 0;
  background: #808080;
}

.indent-left {
  position: absolute;
  left: 181px;
  top: -10px;
  width: 29px;
  height: 68px;
}

.indent-right {
  position: absolute;
  right: 61px;
  bottom: 0;
  width: 29px;
  height: 25px;
}

.v-ruler {
  display: flex;
  flex-direction: column;
  overflow: hidden;
  padding: 0 16px 0 13px;
  font-family: "Liberation Sans", sans-serif;
  font-size: 26px;
}

.v-margin {
  height: 262px;
  margin: 0 0 6px 4px;
  padding: 26px 0 0 9px;
  background: #808080;
}

.v-page {
  flex: 1;
  min-height: 0;
  padding: 26px 0 0 13px;
  background: #fff;
}

/* turned upside down, so the bottom border is the tick above the number */
.v-ruler span {
  display: flex;
  justify-content: center;
  width: 16px;
  height: 67px;
  border-bottom: 3px solid #000;
  writing-mode: vertical-rl;
  transform: rotate(180deg);
  line-height: 16px;
}

.page {
  position: relative;
  overflow: hidden;
  background: #fff;
}

.canvas {
  position: absolute;
  width: 100%;
  height: 100%;
}

.crop-mark {
  position: absolute;
  top: 184px;
  right: 0;
  width: 74px;
  height: 78px;
  border: solid #c0c0c0;
  border-width: 0 0 3px 3px;
}

.raised {
  display: flex;
  align-items: center;
  justify-content: center;
  flex: none;
  width: 59px;
  height: 58px;
  padding: 0 3px 3px 0;
  background: #c0c0c0;
  box-shadow: inset -3px -3px #000, inset 3px 3px #dfdfdf, inset -6px -6px #808080, inset 6px 6px #fff;
}

.v-scroll {
  grid-column: 3;
  grid-row: 1 / 3;
  display: flex;
  flex-direction: column;
}

.split {
  height: 16px;
  margin: 3px 0 0 3px;
  border: 3px solid;
  border-color: #fff #808080 #808080 #fff;
}

.v-track {
  flex: 1;
  padding-top: 15px;
  background: repeating-conic-gradient(#fff 0 25%, #c0c0c0 0 50%) 0 0 / 6px 6px;
}

.v-thumb {
  height: 83px;
}

.tri {
  width: 22px;
  height: 13px;
}

.dbl {
  width: 16px;
  height: 19px;
}

.ball {
  width: 22px;
  height: 22px;
}

.side {
  width: 13px;
  height: 22px;
}

.view {
  width: 26px;
  height: 25px;
}

.h-scroll {
  grid-column: 1 / 4;
  display: flex;
}

.h-scroll .raised {
  width: 58px;
}

.h-scroll .down {
  padding: 3px 0 0 3px;
  box-shadow: inset 0 0 0 3px #000, inset 0 0 0 6px #808080;
}

.h-track {
  flex: 1;
  display: flex;
  background: repeating-conic-gradient(#fff 0 25%, #c0c0c0 0 50%) 0 0 / 6px 6px;
}

.h-track::before {
  content: "";
  flex: 2;
}

.h-track .h-thumb {
  flex: 16;
}

.h-track::after {
  content: "";
  flex: 3;
}

.size-box {
  width: 59px;
}

/* drawing and symbol toolbars */
.drawing .tool {
  width: 75px;
}

.drawing .sep ~ .sep ~ .tool {
  width: 74px;
}

.text-tool {
  display: flex;
  align-items: center;
  padding: 0 13px 0 18px;
}

.text-tool .caret {
  margin-left: 16px;
}

.symbols {
  height: 88px;
  border-bottom-width: 7px;
}

.symbols button {
  flex: 1;
  font-family: "Liberation Mono", monospace;
  font-weight: bold;
  font-size: 34px;
}

.symbols .cjk {
  font-family: "Noto Sans CJK SC", sans-serif;
}

.symbols .light {
  font-weight: normal;
}

.symbols .more {
  flex: none;
  margin-left: 49px;
}

/* status bar */
.status {
  display: flex;
  border-top: 3px solid #fff;
  padding: 6px 0 0 16px;
  gap: 16px;
}

.panel {
  display: flex;
  align-items: baseline;
  height: 55px;
  border: 3px solid;
  border-color: #808080 #fff #fff #808080;
  line-height: 34px;
  white-space: nowrap;
}

.page-info {
  width: 636px;
  padding-left: 140px;
}

.page-info > span {
  flex: none;
  width: 200px;
}

.page-info > span:nth-child(2) {
  width: 160px;
}

.page-info > .en {
  width: auto;
}

.position {
  flex: 1;
  padding: 0 14px 0 10px;
  gap: 24px;
}

.line-no {
  margin-left: auto;
  margin-right: 42px;
}

.mode {
  width: 94px;
  justify-content: center;
  color: #808080;
  text-shadow: 3px 3px #fff;
}

.language {
  width: 210px;
  padding-left: 6px;
}

.language span {
  margin-left: 20px;
}

.spell {
  width: 24px;
  border-right: none;
}

.book {
  margin-left: -3px;
  margin-right: -3px;
  flex: none;
}
```
